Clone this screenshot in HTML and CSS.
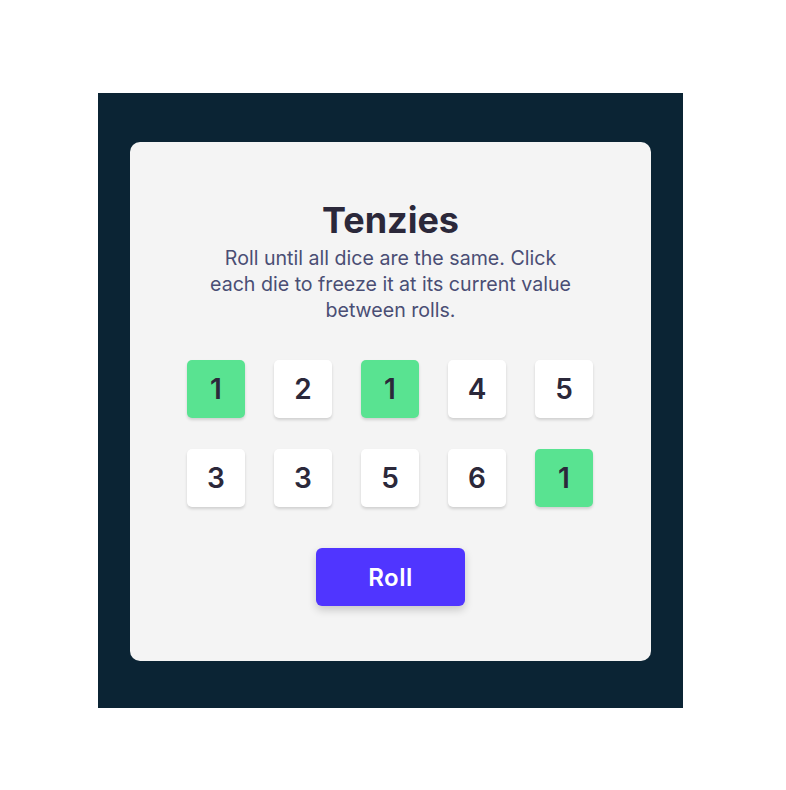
FILE: index.html
```html
<!DOCTYPE html>
<html>
<head>
<meta charset="utf-8">
<link rel="stylesheet" href="styles.css">
</head>
<body>
<div class="frame">
  <main class="card">
    <h1 class="title">Tenzies</h1>
    <p class="instructions">Roll until all dice are the same. Click each die to freeze it at its current value between rolls.</p>
    <div class="dice">
      <button class="die held">1</button>
      <button class="die">2</button>
      <button class="die held">1</button>
      <button class="die">4</button>
      <button class="die">5</button>
      <button class="die">3</button>
      <button class="die">3</button>
      <button class="die">5</button>
      <button class="die">6</button>
      <button class="die held">1</button>
    </div>
    <button class="roll">Roll</button>
  </main>
</div>
</body>
</html>
```
FILE: styles.css
```css
* { box-sizing: border-box; }
html, body { margin: 0; padding: 0; background: #ffffff; }
body { font-family: Inter, "Noto Sans", sans-serif; }
.frame {
  width: 585px;
  height: 615px;
  margin: 93px 0 0 98px;
  background: #0B2434;
  display: flex;
  align-items: center;
  justify-content: center;
}
.card {
  width: 521px;
  height: 519px;
  margin-top: 2px;
  background: #F4F4F4;
  border-radius: 10px;
  display: flex;
  flex-direction: column;
  align-items: center;
  padding-top: 56px;
}
.title {
  margin: 0;
  font-size: 36px;
  line-height: 44px;
  font-weight: 700;
  color: #2B283A;
}
.instructions {
  margin: 3px 0 0;
  max-width: 380px;
  text-align: center;
  font-size: 19.6px;
  line-height: 26px;
  font-weight: 400;
  color: #4A4E74;
}
.dice {
  margin-top: 37px;
  margin-right: 1px;
  display: grid;
  grid-template-columns: repeat(5, 58px);
  grid-auto-rows: 58px;
  column-gap: 29px;
  row-gap: 31px;
}
.die {
  border: none;
  border-radius: 5px;
  background: #FFFFFF;
  box-shadow: 0 2px 3px rgba(0, 0, 0, 0.15);
  font-family: Inter, sans-serif;
  font-size: 28px;
  font-weight: 600;
  color: #2B283A;
  padding: 0;
  display: flex;
  align-items: center;
  justify-content: center;
}
.die.held { background: #59E391; }
.roll {
  margin-top: 41px;
  width: 149px;
  height: 58px;
  border: none;
  border-radius: 6px;
  background: #5035FF;
  color: #FFFFFF;
  font-family: Inter, sans-serif;
  font-size: 24px;
  font-weight: 600;
  letter-spacing: 0.5px;
  box-shadow: 0 4px 8px rgba(0, 0, 0, 0.18);
}
```
